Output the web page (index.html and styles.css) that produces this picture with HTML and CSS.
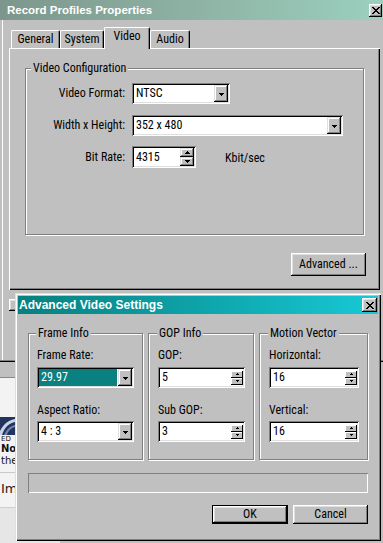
FILE: index.html
```html
<!DOCTYPE html>
<html>
<head>
<meta charset="utf-8">
<title>Record Profiles Properties</title>
<link rel="stylesheet" href="styles.css">
</head>
<body>
<div class="desktop">

  <div class="bgpage">
    <div class="bg-band"></div>
    <div class="bg-white"></div>
    <div class="bg-img">
      <svg width="60" height="18" viewBox="0 0 60 18"><rect width="60" height="18" fill="#22335e"/><path d="M0 14 C4 6 9 3 15 2 L15 5 C10 6 5 9 2 18 L0 18Z" fill="#c9d3e6"/><path d="M4 18 C7 12 10 9 15 8 L15 10 C11 11 8 14 7 18Z" fill="#6f84b4"/></svg>
    </div>
    <div class="bg-text small">ED</div>
    <div class="bg-text bold">No</div>
    <div class="bg-text">the</div>
    <div class="bg-sep"></div>
    <div class="bg-text big">Im</div>
    <div class="bg-rest"></div>
  </div>

  <div class="window main">
    <div class="titlebar inactive">
      <span class="title">Record Profiles Properties</span>
      <span class="close main-close"><svg width="8" height="7" viewBox="0 0 8 7"><path d="M0 0h2v1h-2z M6 0h2v1h-2z M1 1h2v1h-2z M5 1h2v1h-2z M2 2h4v1h-4z M3 3h2v1h-2z M2 4h4v1h-4z M1 5h2v1h-2z M5 5h2v1h-2z M0 6h2v1h-2z M6 6h2v1h-2z"/></svg></span>
    </div>

    <div class="tabs">
      <div class="tab t-general">General</div>
      <div class="tab t-system">System</div>
      <div class="tab t-video selected">Video</div>
      <div class="tab t-audio">Audio</div>
    </div>

    <div class="panel">
      <div class="group vc">
        <div class="group-label">Video Configuration</div>
        <div class="form-row r1">
          <div class="form-label">Video Format:</div>
          <div class="field combo w-format">
            <span class="val">NTSC</span>
            <span class="dd"><svg width="5" height="3" viewBox="0 0 5 3"><path d="M0 0h5v1h-1v1h-1v1h-1v-1h-1v-1h-1z"/></svg></span>
          </div>
        </div>
        <div class="form-row r2">
          <div class="form-label">Width x Height:</div>
          <div class="field combo w-size">
            <span class="val">352 x 480</span>
            <span class="dd"><svg width="5" height="3" viewBox="0 0 5 3"><path d="M0 0h5v1h-1v1h-1v1h-1v-1h-1v-1h-1z"/></svg></span>
          </div>
        </div>
        <div class="form-row r3">
          <div class="form-label">Bit Rate:</div>
          <div class="field spin big-spin w-rate">
            <span class="val">4315</span>
            <span class="spinbtns">
              <span class="sb"><svg width="5" height="3" viewBox="0 0 5 3"><path d="M2 0h1v1h1v1h1v1h-5v-1h1v-1h1z"/></svg></span>
              <span class="sb"><svg width="5" height="3" viewBox="0 0 5 3"><path d="M0 0h5v1h-1v1h-1v1h-1v-1h-1v-1h-1z"/></svg></span>
            </span>
          </div>
          <div class="unit">Kbit/sec</div>
        </div>
      </div>
      <div class="panel-actions">
        <button class="btn adv">Advanced ...</button>
      </div>
    </div>

    <div class="main-footer">
      <span class="btn hidden-btn"></span>
    </div>
  </div>

  <div class="window dialog">
    <div class="titlebar active">
      <span class="title">Advanced Video Settings</span>
      <span class="close dlg-close"><svg width="8" height="7" viewBox="0 0 8 7"><path d="M0 0h2v1h-2z M6 0h2v1h-2z M1 1h2v1h-2z M5 1h2v1h-2z M2 2h4v1h-4z M3 3h2v1h-2z M2 4h4v1h-4z M1 5h2v1h-2z M5 5h2v1h-2z M0 6h2v1h-2z M6 6h2v1h-2z"/></svg></span>
    </div>

    <div class="groups">
      <div class="group g-frame">
        <div class="group-label">Frame Info</div>
        <div class="ctl-label first">Frame Rate:</div>
        <div class="field combo ctl first-ctl">
          <span class="val sel">29.97</span>
          <span class="dd"><svg width="5" height="3" viewBox="0 0 5 3"><path d="M0 0h5v1h-1v1h-1v1h-1v-1h-1v-1h-1z"/></svg></span>
        </div>
        <div class="ctl-label second">Aspect Ratio:</div>
        <div class="field combo ctl second-ctl">
          <span class="val">4 : 3</span>
          <span class="dd"><svg width="5" height="3" viewBox="0 0 5 3"><path d="M0 0h5v1h-1v1h-1v1h-1v-1h-1v-1h-1z"/></svg></span>
        </div>
      </div>

      <div class="group g-gop">
        <div class="group-label">GOP Info</div>
        <div class="ctl-label first">GOP:</div>
        <div class="field spin small-spin ctl first-ctl">
          <span class="val">5</span>
          <span class="spinbtns">
            <span class="sb"><svg width="3" height="2" viewBox="0 0 3 2"><path d="M1 0h1v1h1v1h-3v-1h1z"/></svg></span>
            <span class="sb"><svg width="3" height="2" viewBox="0 0 3 2"><path d="M0 0h3v1h-1v1h-1v-1h-1z"/></svg></span>
          </span>
        </div>
        <div class="ctl-label second">Sub GOP:</div>
        <div class="field spin small-spin ctl second-ctl">
          <span class="val">3</span>
          <span class="spinbtns">
            <span class="sb"><svg width="3" height="2" viewBox="0 0 3 2"><path d="M1 0h1v1h1v1h-3v-1h1z"/></svg></span>
            <span class="sb"><svg width="3" height="2" viewBox="0 0 3 2"><path d="M0 0h3v1h-1v1h-1v-1h-1z"/></svg></span>
          </span>
        </div>
      </div>

      <div class="group g-motion">
        <div class="group-label">Motion Vector</div>
        <div class="ctl-label first">Horizontal:</div>
        <div class="field spin small-spin ctl first-ctl">
          <span class="val">16</span>
          <span class="spinbtns">
            <span class="sb"><svg width="3" height="2" viewBox="0 0 3 2"><path d="M1 0h1v1h1v1h-3v-1h1z"/></svg></span>
            <span class="sb"><svg width="3" height="2" viewBox="0 0 3 2"><path d="M0 0h3v1h-1v1h-1v-1h-1z"/></svg></span>
          </span>
        </div>
        <div class="ctl-label second">Vertical:</div>
        <div class="field spin small-spin ctl second-ctl">
          <span class="val">16</span>
          <span class="spinbtns">
            <span class="sb"><svg width="3" height="2" viewBox="0 0 3 2"><path d="M1 0h1v1h1v1h-3v-1h1z"/></svg></span>
            <span class="sb"><svg width="3" height="2" viewBox="0 0 3 2"><path d="M0 0h3v1h-1v1h-1v-1h-1z"/></svg></span>
          </span>
        </div>
      </div>
    </div>

    <div class="status"></div>

    <div class="dlg-buttons">
      <button class="btn default ok">OK</button>
      <button class="btn cancel">Cancel</button>
    </div>
  </div>

</div>
</body>
</html>
```

FILE: styles.css
```css
* { box-sizing: border-box; }
html, body { margin: 0; padding: 0; }
body {
  width: 383px;
  height: 543px;
  overflow: hidden;
  background: #c0c0c0;
  color: #000;
  font-family: "Roboto Condensed", "Roboto", "Liberation Sans", Arial, sans-serif;
  font-stretch: condensed;
  font-size: 12px;
  line-height: 15px;
}
.desktop { position: relative; width: 383px; height: 543px; overflow: hidden; }

/* background web page peeking out at the bottom-left */
.bgpage {
  position: absolute; left: 0; top: 362px; width: 60px; height: 181px;
  display: flex; flex-direction: column; background: #f3f3f3;
  font-family: "DejaVu Sans", Verdana, sans-serif;
  font-stretch: normal;
}
.bg-band { height: 16px; background: #c0c0c0; border-bottom: 1px solid #8a8a8a; flex: none; }
.bg-white { height: 39px; background: #f3f3f3; flex: none; }
.bg-img { height: 18px; flex: none; line-height: 0; }
.bg-text { font-size: 10px; line-height: 12px; white-space: nowrap; color: #111; padding-left: 1px; }
.bg-text.small { font-size: 7px; line-height: 8px; }
.bg-text.bold { font-weight: bold; font-size: 10px; }
.bg-text.big { font-size: 13px; line-height: 20px; margin-top: 6px; color: #222; }
.bg-sep { height: 1px; background: #c8c8c8; margin-top: 5px; flex: none; }
.bg-rest { flex: 1; background: #e6e6e6; border-top: 1px solid #cfcfcf; margin-top: 8px; }

/* windows */
.window { position: absolute; background: #c0c0c0; }

.main {
  left: 0; top: 0; width: 383px; height: 362px;
  background: linear-gradient(90deg, #c0c0c0 2px, #fff 2px, #fff 3px, #c0c0c0 3px);
  box-shadow: inset 0 -1px #000, inset 0 -2px #808080;
}

.titlebar { display: flex; align-items: center; color: #fff; }
.titlebar .title {
  flex: 1;
  font-family: "Liberation Sans", Arial, sans-serif;
  font-stretch: normal;
  font-weight: bold;
  white-space: nowrap;
}
.titlebar.inactive {
  height: 20px;
  padding-left: 7px;
  background: linear-gradient(90deg, #7d968b 0%, #8fb5a6 55%, #9bd0bf 100%);
}
.titlebar.inactive .title { font-size: 11.5px; }
.titlebar.active {
  height: 18px;
  padding-left: 1px;
  background: linear-gradient(90deg, #07807f 0%, #0ea3a9 50%, #17c9d6 100%);
}
.titlebar.active .title { font-size: 12px; }

.close {
  display: flex; align-items: center; justify-content: center;
  background: #c0c0c0;
  box-shadow: inset -1px -1px #000, inset 1px 1px #fff, inset -2px -2px #808080, inset 2px 2px #dfdfdf;
  fill: #000;
}
.main-close { width: 13px; height: 13px; margin-right: 1px; }
.dlg-close { width: 15px; height: 14px; margin-right: 1px; }

/* tabs */
.tabs {
  display: flex; align-items: flex-end;
  height: 21px; margin-top: 7px; padding-left: 11px;
}
.tab {
  height: 18px;
  display: flex; align-items: center; justify-content: center;
  background: #c0c0c0;
  border-top: 1px solid #fff;
  border-left: 1px solid #fff;
  border-right: 1px solid #000;
  border-radius: 2px 2px 0 0;
  box-shadow: inset -1px 0 #808080;
  padding-bottom: 1px;
  white-space: nowrap;
}
.t-general { width: 49px; }
.t-system { width: 44px; }
.t-video { width: 46px; }
.t-audio { width: 40px; }
.tab.selected {
  height: 22px;
  margin-bottom: -1px;
  padding-bottom: 4px;
  position: relative;
  z-index: 1;
}

.panel {
  margin-left: 9px;
  width: 371px;
  height: 242px;
  padding: 20px 14px 0 16px;
  box-shadow: inset 1px 1px #fff, inset -1px -1px #000, inset -2px -2px #808080;
}

/* group boxes */
.group {
  border: 1px solid #808080;
  box-shadow: inset 1px 1px #fff, 1px 1px #fff;
}
.group-label {
  display: table;
  margin: -8px 0 0 5px;
  padding: 0 2px;
  background: #c0c0c0;
  line-height: 15px;
  white-space: nowrap;
}
.vc { height: 167px; margin-right: 2px; }

.form-row { display: flex; align-items: center; }
.form-row.r1 { margin-top: 7px; height: 21px; }
.form-row.r2 { margin-top: 11px; height: 21px; }
.form-row.r3 { margin-top: 10px; height: 22px; }
.form-label { width: 99px; text-align: right; margin-right: 7px; white-space: nowrap; }
.unit { margin-left: 29px; margin-top: 2px; }

/* fields */
.field {
  display: flex; align-items: center;
  height: 100%;
  background: #fff;
  padding: 2px;
  box-shadow: inset 1px 1px #808080, inset -1px -1px #fff, inset 2px 2px #000, inset -2px -2px #dfdfdf;
}
.field .val { flex: 1; padding-left: 2px; white-space: nowrap; align-self: stretch; display: flex; align-items: center; }
.field .val.sel { background: #0a8080; color: #fff; margin-right: 1px; }
.w-format { width: 98px; }
.w-size { width: 211px; }
.w-rate { width: 64px; }

.dd {
  width: 14px; align-self: stretch;
  display: flex; align-items: center; justify-content: center;
  background: #c0c0c0;
  box-shadow: inset -1px -1px #000, inset 1px 1px #dfdfdf, inset -2px -2px #808080, inset 2px 2px #fff;
  fill: #000;
  padding-top: 1px;
}
.spinbtns { display: flex; flex-direction: column; }
.sb {
  display: flex; align-items: center; justify-content: center;
  background: #c0c0c0;
  box-shadow: inset -1px -1px #000, inset 1px 1px #dfdfdf, inset -2px -2px #808080, inset 2px 2px #fff;
  fill: #000;
}
.big-spin .spinbtns { width: 14px; align-self: stretch; }
.big-spin .sb { flex: 1; }
.small-spin .spinbtns { width: 12px; margin-right: 0; }
.small-spin .sb { height: 7px; box-shadow: inset -1px -1px #000, inset 1px 1px #fff; }

/* buttons */
.btn {
  font: inherit;
  color: #000;
  border: 0;
  padding: 0;
  background: #c0c0c0;
  box-shadow: inset -1px -1px #000, inset 1px 1px #fff, inset -2px -2px #808080, inset 2px 2px #dfdfdf;
}
.btn.default {
  box-shadow: inset 0 0 0 1px #000, inset -2px -2px #000, inset 2px 2px #fff, inset -3px -3px #808080, inset 3px 3px #dfdfdf;
}
.panel-actions { display: flex; justify-content: flex-end; margin-top: 18px; }
.adv { width: 75px; height: 23px; }

.main-footer { padding: 9px 0 0 9px; }
.hidden-btn { display: block; width: 75px; height: 12px; }

/* dialog */
.dialog {
  left: 15px; top: 293px; width: 366px; height: 248px;
  padding: 3px;
  box-shadow: inset 1px 1px #dfdfdf, inset 2px 2px #fff, inset -1px -1px #000, inset -2px -2px #808080;
}
.groups {
  display: grid;
  grid-template-columns: 115px 106px 109px;
  column-gap: 5px;
  margin: 19px 10px 0 10px;
}
.groups .group { height: 127px; padding: 0 8px 0 9px; }
.groups .group .group-label { margin-left: -1px; }
.g-frame { padding-left: 8px !important; }
.ctl-label { white-space: nowrap; }
.ctl-label.first { margin-top: 7px; }
.ctl-label.second { margin-top: 15px; }
.ctl { height: 21px; }
.first-ctl { margin-top: 4px; }
.second-ctl { margin-top: 3px; }

.status {
  height: 20px;
  margin: 13px 10px 0 10px;
  box-shadow: inset 1px 1px #808080, inset -1px -1px #fff;
}
.dlg-buttons {
  display: flex; justify-content: flex-end; gap: 5px;
  margin: 12px 10px 0 0;
}
.ok { width: 76px; height: 19px; }
.cancel { width: 75px; height: 19px; }
```
